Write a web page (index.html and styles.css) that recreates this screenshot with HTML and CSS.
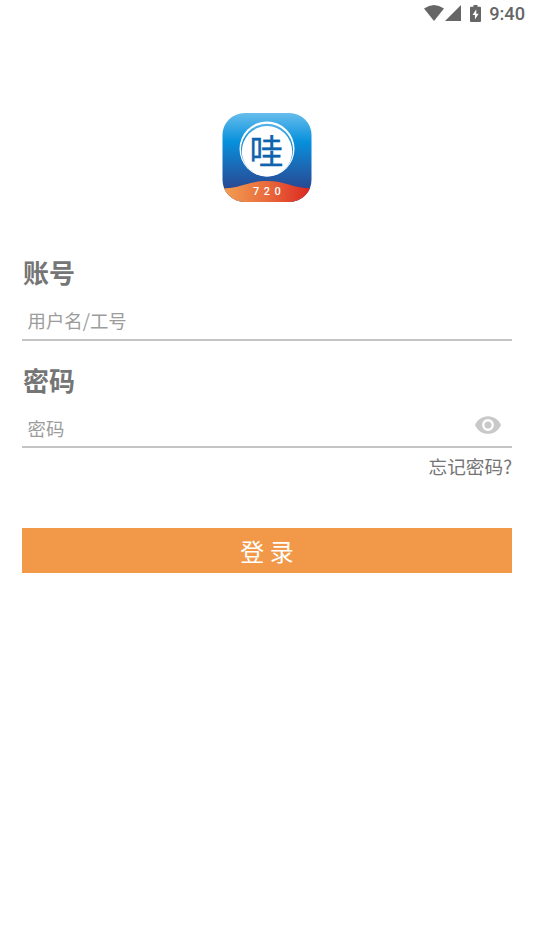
FILE: index.html
```html
<!DOCTYPE html>
<html lang="zh-CN">
<head>
<meta charset="utf-8">
<title>登录</title>
<link rel="stylesheet" href="styles.css">
</head>
<body>
<header class="status">
  <svg class="wifi" viewBox="0 0 20 16"><path d="M0 3.500Q10-3.500 20 3.500L10 16Z"/></svg>
  <svg class="signal" viewBox="0 0 16 16"><path d="M16 0V16H0Z"/></svg>
  <svg class="battery" viewBox="0 0 11 17"><path fill-rule="evenodd" d="M3.500 0h4v1.700H10q1 0 1 1V16q0 1-1 1H1q-1 0-1-1V2.700q0-1 1-1h2.500ZM6.300 4.300 2.500 10h2.400v4.500L8.700 8.700H6.300Z"/></svg>
  <span class="time">9:40</span>
</header>
<main class="login">
  <svg class="logo" viewBox="0 0 90 90">
    <defs>
      <linearGradient id="sky" x1="0" y1="0" x2="0" y2="1">
        <stop offset="0" stop-color="#68bdec"/>
        <stop offset=".1" stop-color="#48afe7"/>
        <stop offset=".32" stop-color="#0790dc"/>
        <stop offset=".6" stop-color="#1b68b4"/>
        <stop offset=".85" stop-color="#294791"/>
      </linearGradient>
      <linearGradient id="hill"><stop stop-color="#f3a052"/><stop offset=".5" stop-color="#e96b3c"/><stop offset="1" stop-color="#db241f"/></linearGradient>
      <linearGradient id="ring" x1="0" y1="0" x2="0" y2="1"><stop stop-color="#58b5e9"/><stop offset=".3" stop-color="#1594dd"/><stop offset="1" stop-color="#1677c4"/></linearGradient>
      <clipPath id="tile"><rect x=".5" width="89" height="89" rx="22"/></clipPath>
    </defs>
    <g clip-path="url(#tile)">
      <rect width="90" height="90" fill="url(#sky)"/>
      <path fill="url(#hill)" d="M0 75C16 76.500 26 68 45 68S74 76.500 90 75V90H0Z"/>
    </g>
    <circle cx="45" cy="36" r="27.500" fill="#fff"/>
    <circle cx="45" cy="36.800" r="26" fill="url(#ring)"/>
    <circle cx="45" cy="38.300" r="25.200" fill="#fff"/>
    <text class="logo-char" x="44.500" y="50.500">哇</text>
    <text class="logo-num" x="31 41.800 52.600" y="82">720</text>
  </svg>
  <form class="form">
    <label class="label" for="user">账号</label>
    <div class="field"><input id="user" class="input" type="text" placeholder="用户名/工号"></div>
    <label class="label label-pass" for="pass">密码</label>
    <div class="field">
      <input id="pass" class="input input-pass" type="password" placeholder="密码">
      <svg class="eye" viewBox="1 4.500 22 15"><path d="M12 4.500C7 4.500 2.730 7.610 1 12c1.730 4.390 6 7.500 11 7.500s9.270-3.110 11-7.500c-1.730-4.390-6-7.500-11-7.500zM12 17a5 5 0 1 1 0-10 5 5 0 0 1 0 10zm0-8a3 3 0 1 0 0 6 3 3 0 0 0 0-6z"/></svg>
    </div>
    <a class="forgot">忘记密码?</a>
    <button class="submit" type="button">登 录</button>
  </form>
</main>
</body>
</html>
```
FILE: styles.css
```css
* { box-sizing: border-box; }
body {
  margin: 0;
  min-height: 950px;
  background: #fff;
  color: #757575;
  font-family: "Noto Sans CJK SC", sans-serif;
}
.status {
  display: flex;
  height: 27px;
  padding: 5px 9px 0 0;
  justify-content: flex-end;
  align-items: flex-start;
  fill: #666;
}
.wifi { width: 20px; height: 16px; margin-right: 1px; }
.signal { width: 16px; height: 16px; margin-right: 9px; }
.battery { width: 11px; height: 17px; margin-right: 8px; }
.time { font: 500 18.200px/18px Roboto, sans-serif; color: #666; }
.login {
  display: flex;
  flex-direction: column;
  padding: 86px 22px 0;
}
.logo { width: 90px; height: 90px; align-self: center; }
.logo-char {
  font: 400 34px "Noto Sans CJK SC", sans-serif;
  fill: #0d63ad;
  stroke: #0d63ad;
  stroke-width: .3px;
  text-anchor: middle;
}
.logo-num {
  font: 500 11px Roboto, sans-serif;
  fill: #fff;
}
.form { display: flex; flex-direction: column; margin-top: 49px; }
.label {
  padding-left: 1px;
  font-size: 26px;
  line-height: 40px;
  font-weight: 700;
}
.label-pass { margin-top: 19px; }
.field {
  display: flex;
  height: 49px;
  padding: 0 11.500px 0 5.500px;
  align-items: flex-start;
  border-bottom: 2px solid #c4c4c4;
}
.label-pass + .field { height: 48px; }
.input {
  flex: 1;
  min-width: 0;
  height: 28px;
  margin-top: 14px;
  padding: 0;
  border: 0;
  outline: 0;
  background: none;
  font: 18.400px/28px "Noto Sans CJK SC", sans-serif;
}
.input::placeholder { color: #9c9c9c; opacity: 1; }
.eye { width: 26px; height: 18px; margin-top: 16px; fill: #c9c9c9; }
.forgot {
  align-self: flex-end;
  margin-top: 4px;
  font-size: 18.670px;
  line-height: 28px;
}
.submit {
  height: 45px;
  margin-top: 48px;
  padding: 0;
  border: 0;
  background: #f19849;
  color: #fff;
  font: 24px/45px "Noto Sans CJK SC", sans-serif;
}
```
